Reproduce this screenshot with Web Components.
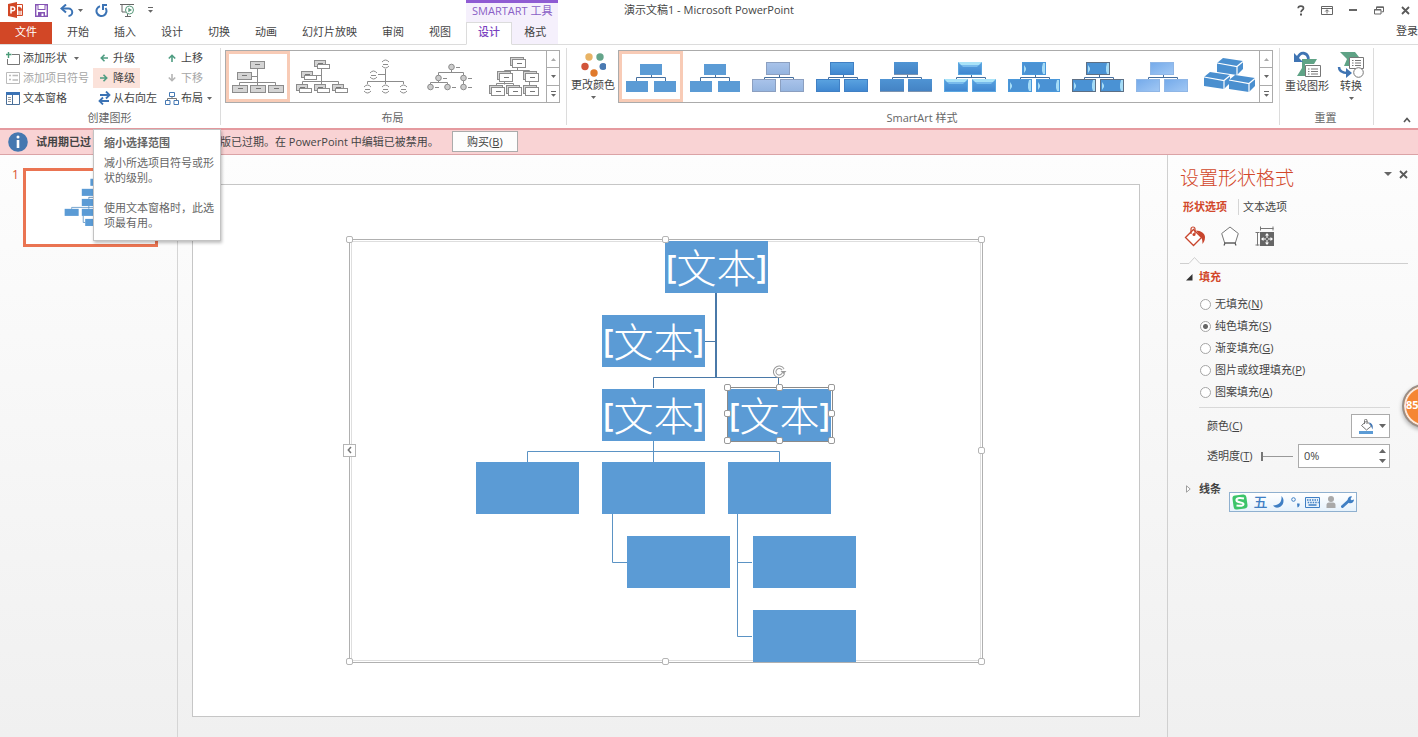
<!DOCTYPE html>
<html lang="zh-CN">
<head>
<meta charset="utf-8">
<title>演示文稿1 - Microsoft PowerPoint</title>
<style>
  html, body { margin: 0; height: 100%; }
  body {
    overflow: hidden;
    font-family: "Open Sans", "Noto Sans CJK SC", sans-serif;
    font-size: 11px;
    line-height: 16px;
    color: #444;
    background: #fff;
  }
</style>
</head>
<body>
<ppt-app></ppt-app>

<script>
const RESET = `
  * { box-sizing: border-box; }
  button, input { font: inherit; color: inherit; }
  button { background: none; border: 0; padding: 0; margin: 0; cursor: default; }
  a { color: inherit; text-decoration: none; }
  svg { display: block; }
`;

function define(tag, css, html, setup) {
  const template = document.createElement('template');
  template.innerHTML = `<style>${RESET}${css}</style>${html}`;
  customElements.define(tag, class extends HTMLElement {
    connectedCallback() {
      if (this.shadowRoot) return;
      const root = this.attachShadow({ mode: 'open' });
      root.append(template.content.cloneNode(true));
      if (setup) setup(this, root);
    }
  });
}

/* ---------- icons: [width, height, markup] ---------- */
const ICONS = {
  app: [15, 16, `<path d="M0 2l9-2v16l-9-2z" fill="#d24726"/><path d="M9 2.5h5.5v11H9" fill="#fff" stroke="#d24726"/><path d="M10.500 5v3.500h3A3 3 0 0 0 10.500 5zM10 10h3.500M10 12h3.500" fill="#d24726" stroke="#d24726" stroke-width=".8"/><path d="M3 11.500V5h1.800a1.800 1.800 0 0 1 0 3.800H3" fill="none" stroke="#fff" stroke-width="1.500"/>`],
  save: [13, 13, `<path d="M.7.700h11.600v11.600H.7z" fill="#fff" stroke="#8655b5" stroke-width="1.400"/><path d="M2.500 0h8v6h-8z" fill="#8655b5"/><path d="M3.500 1h6v4h-6z" fill="#fff"/><path d="M3 8h7v5H3z" fill="#8655b5"/><path d="M6.500 9.500h2V12h-2z" fill="#fff"/>`],
  undo: [14, 13, `<path d="M2 4.500h6.500a3.700 3.700 0 0 1 0 7.500" fill="none" stroke="#3b73b5" stroke-width="2"/><path d="M6 .5 1.500 4.500 6 8.500" fill="none" stroke="#3b73b5" stroke-width="2"/>`],
  redo: [13, 13, `<path d="M10.500 4A5 5 0 1 1 5 2.200" fill="none" stroke="#3b73b5" stroke-width="2"/><path d="M7 1h5M8 1v5" fill="none" stroke="#3b73b5" stroke-width="2"/>`],
  show: [16, 14, `<path d="M0 1.500h14M2 1.500V9h4" fill="none" stroke="#666"/><path d="M5 13.500h6M7.500 11v2" stroke="#666" fill="none"/><circle cx="9.500" cy="7" r="4" fill="#fff" stroke="#5a9b7d"/><path d="M8.300 4.800 12 7 8.300 9.200z" fill="#5a9b7d"/>`],
  more: [5, 6, `<path d="M0 .5h5" stroke="#666"/><path d="M0 3h5L2.500 5.700z" fill="#666"/>`],
  caret: [5, 3, `<path d="M0 0h5L2.500 3z" fill="#666"/>`],
  caretUp: [5, 3, `<path d="M0 3h5L2.500 0z" fill="#aaa"/>`],
  stepUp: [7, 4, `<path d="M0 4h7L3.500 0z" fill="#666"/>`],
  stepDown: [7, 4, `<path d="M0 0h7L3.500 4z" fill="#666"/>`],
  help: [8, 11, `<path d="M1.200 3.200C1.200.3 6.500.3 6.500 3.200 6.500 5 4 5 4 7.200" fill="none" stroke="#555" stroke-width="1.700"/><path d="M3 8.500h2v2H3z" fill="#555"/>`],
  ribbonOpt: [12, 9, `<path d="M.5.500h11v8H.5zM.5 2.500h11M6 7.500V4M4.200 5.500 6 3.700 7.800 5.500" fill="none" stroke="#666"/>`],
  min: [8, 2, `<path d="M0 0h8v2H0z" fill="#666"/>`],
  restore: [10, 9, `<path d="M.5 3.500h6.500v4.500H.5zM2.500 3V.8h7v5H7.500" fill="none" stroke="#666"/><path d="M2 1.500h7.500M0 4h7" stroke="#666"/>`],
  close: [9, 9, `<path d="M1 1l7 7M8 1 1 8" stroke="#5a5a5a" stroke-width="1.800"/>`],
  addShape: [14, 13, `<path d="M6 2.500h7.500v10h-12V7" fill="none" stroke="#777"/><path d="M2.500 0v6M0 2.500h5.500" stroke="#4a9b78" stroke-width="1.400"/>`],
  bullets: [14, 12, `<path d="M.5.500h13v11H.5z" fill="#fff" stroke="#bbb"/><path d="M3 3.500h2M3 7.500h2M6.500 3.500H12M6.500 8H12" stroke="#bbb" stroke-width="1.400"/>`],
  textPane: [14, 13, `<path d="M.5.500h13v12H.5z" fill="#fff" stroke="#4a6f99"/><path d="M0 0h14v3H0z" fill="#3b73b5"/><path d="M6.500 3v10" stroke="#4a6f99"/><path d="M2 5.500h3M2 7.500h3M2 9.500h3" stroke="#999"/>`],
  left: [8, 8, `<path d="M8 4H1.500M4.500.8 1.300 4l3.200 3.200" fill="none" stroke="#4f9d82" stroke-width="1.600"/>`],
  right: [8, 8, `<path d="M0 4h6.500M3.500.8 6.700 4 3.500 7.200" fill="none" stroke="#4f9d82" stroke-width="1.600"/>`],
  up: [8, 8, `<path d="M4 8V1.500M.8 4.500 4 1.300l3.200 3.200" fill="none" stroke="#4f9d82" stroke-width="1.600"/>`],
  down: [8, 8, `<path d="M4 0v6.500M.8 3.500 4 6.700l3.200-3.200" fill="none" stroke="#b5b5b5" stroke-width="1.600"/>`],
  swap: [13, 14, `<path d="M2 4h9M8 .5 11.500 4 8 7.500M11 10H2M5 6.500 1.500 10 5 13.500" fill="none" stroke="#3b73b5" stroke-width="1.800"/>`],
  layout: [14, 13, `<path d="M4.500.500h5v4h-5zM.5 8.500h4.500v4H.5zM9 8.500h4.500v4H9z" fill="#fff" stroke="#4479b5"/><path d="M7 4.500v2M2.500 8.500v-2h9v2" fill="none" stroke="#777"/>`],
  colors: [26, 26, `<circle cx="9" cy="6" r="3.700" fill="#e8b365"/><circle cx="20" cy="6" r="3.700" fill="#64a48a"/><circle cx="5" cy="15.500" r="3.700" fill="#d2553a"/><circle cx="23" cy="15.500" r="3.500" fill="#4a7ab2"/><circle cx="14" cy="22" r="3.700" fill="#e07a2c"/>`],
  reset: [28, 27, `<path d="M9 8h15l-3 5h-9v12H4l5-8z" fill="#5fa386"/><path d="M15.500 8C14.500 1 7.500 0 4.500 7" fill="none" stroke="#3f74b3" stroke-width="2.800"/><path d="M1 2v9h9z" fill="#3f74b3"/><path d="M12.500 14.500h15v11h-15z" fill="#fff" stroke="#777"/><path d="M15 18h1.500M18 18h7M15 20.500h1.500M18 20.500h7M15 23h1.500M18 23h7" stroke="#777"/>`],
  convert: [28, 27, `<path d="M3 1h15l4 5-4 6h-6v3H7l3-7z" fill="#5fa386"/><path d="M12.500 6.500h14v11h-14z" fill="#fff" stroke="#777"/><path d="M15 9.500h1.500M18 9.500h6M15 12h1.500M18 12h6M15 14.500h1.500M18 14.500h6" stroke="#777"/><circle cx="21.500" cy="21.500" r="4.800" fill="#fff" stroke="#777"/><path d="M2 16c0 5 4 6 9 6" fill="none" stroke="#3f74b3" stroke-width="2.500"/><path d="M9 17l6 5-6 5z" fill="#3f74b3"/>`],
  collapse: [8, 6, `<path d="M1 5l3-3.500L7 5" fill="none" stroke="#555" stroke-width="1.600"/>`],
  info: [20, 20, `<circle cx="10" cy="10" r="9.800" fill="#4578b0"/><circle cx="10" cy="5" r="1.500" fill="#fff"/><path d="M8.700 8h2.600v8H8.700z" fill="#fff"/>`],
  paneCaret: [8, 4, `<path d="M0 0h8L4 4z" fill="#666"/>`],
  bucket: [22, 21, `<path d="M1.500 11.500 9.500 3.500l8 8-8 8z" fill="#fff" stroke="#c8452d" stroke-width="1.300"/><path d="M7 8V3a2 2 0 0 1 4 0v5" fill="none" stroke="#c8452d" stroke-width="1.200"/><circle cx="10" cy="8.500" r="1.500" fill="#c8452d"/><path d="M12 4.500c5 0 9 3 9 6.500s-1 5-2.500 7c0-4-.5-5-1-6z" fill="#c8452d"/>`],
  pentagon: [18, 20, `<path d="M9 1l8.300 6.500-3 9.500H3.700l-3-9.500z" fill="#fff" stroke="#777"/><path d="M3.500 17h11M3 19.500l1-2.500M15 19.500 14 17" stroke="#555" stroke-width="1.200"/>`],
  size: [19, 20, `<path d="M5 2.500h13.500M5.500.5v4M18 .5v4M2.500 6v13.500M.5 6.500h4M.5 19h4" stroke="#777" fill="none"/><path d="M5 6h14v14H5z" fill="#666"/><path d="M12 7l2 2.500h-4zM12 19l2-2.500h-4zM6 13l2.500-2v4zM18 13l-2.500-2v4z" fill="#fff"/><path d="M12 9v8M8 13h8" stroke="#fff"/><path d="M11 12h2v2h-2z" fill="#666"/>`],
  open: [7, 7, `<path d="M6.500 0v6.500H0z" fill="#333"/>`],
  closed: [5, 8, `<path d="M.5.800 4.200 4 .5 7.200z" fill="#fff" stroke="#888" stroke-width=".8"/>`],
  fillColor: [15, 15, `<path d="M2.500 6.500 7.500 2l5 5-5 4z" fill="#fff" stroke="#777"/><path d="M5.500 5V1.500a1 1 0 0 1 2.500 0V5" fill="none" stroke="#777"/><path d="M10 3.500c3 .5 4.500 3 3.500 7L12 7z" fill="#3b73b5"/><path d="M0 12h14v3H0z" fill="#5b9bd5"/>`],
  rotate: [15, 14, `<path d="M11 4.500A4.500 4.500 0 1 0 11.500 8" fill="none" stroke="#999" stroke-width="3.500"/><path d="M11 4.500A4.500 4.500 0 1 0 11.500 8" fill="none" stroke="#fff" stroke-width="1.500"/><path d="M8.500 6h6L11.500 9z" fill="#999"/>`],
  sogou: [16, 16, `<rect x="1" y="1" width="14" height="14" rx="3" fill="#3cc46a" transform="rotate(-8 8 8)"/><path d="M12 4.500C7 3.500 4 4 4.500 6.500S11.500 8 11.500 10s-3 2-7 1.500" fill="none" stroke="#fff" stroke-width="2"/>`],
  moon: [12, 12, `<path d="M8.500 0C12 3.500 11 10 5.500 11.500 3 12 1 11 0 9.500 6 9.500 9 6 8.500 0z" fill="#3f7fc4"/>`],
  punct: [9, 11, `<circle cx="2.500" cy="2.500" r="1.800" fill="none" stroke="#3f7fc4"/><path d="M6 6.500h2.500c.5 2-.5 3.500-2 4z" fill="#3f7fc4"/>`],
  keyboard: [15, 11, `<path d="M.5.500h14v10H.5z" fill="#e8f2fb" stroke="#3f7fc4"/><path d="M2 3h11M2.700 5.500h11" stroke="#3f7fc4" stroke-width="1.500" stroke-dasharray="1.500 1"/><path d="M3.500 8h8" stroke="#3f7fc4" stroke-width="1.500"/>`],
  person: [10, 12, `<circle cx="5" cy="3" r="3" fill="#a9a9a9"/><path d="M.5 12V9a2.500 2.500 0 0 1 2.500-2.500h4A2.500 2.500 0 0 1 9.500 9v3z" fill="#a9a9a9"/>`],
  wrench: [13, 12, `<path d="M1.500 10.500 7 5.500" stroke="#3f7fc4" stroke-width="3" stroke-linecap="round"/><path d="M7 2.500C8 .5 9.500 0 11 .5L9.500 3l1 1.300L13 3.500C13 6 10.500 8 8 7S6.500 4 7 2.500z" fill="#3f7fc4"/>`]
};
define('ui-icon', `:host { display: inline-block; flex: none; }`, ``, (host, root) => {
  const [w, h, body] = ICONS[host.getAttribute('name')];
  root.innerHTML += `<svg width="${w}" height="${h}" viewBox="0 0 ${w} ${h}" aria-hidden="true">${body}</svg>`;
});

/* ---------- header ---------- */
define('app-header', `
  :host {
    display: grid; flex: none; background: #fff;
    grid-template-columns: max-content max-content 1fr;
    grid-template-rows: 22px 22px;
    border-bottom: 1px solid #dcdcdc;
  }
  .qat { grid-area: 1 / 1; display: flex; align-items: center; padding: 0 8px; height: 20px; }
  .qat button { display: flex; align-items: center; gap: 4px; height: 20px; }
  .qat .wide { margin-right: 12px; }
  .context {
    grid-area: 1 / 2; border-top: 3px solid #8f5bd3; background: #f5f0fc; color: #8a5fc6;
    padding: 0 6px; line-height: 16px; white-space: nowrap; text-align: center;
  }
  h1 { grid-area: 1 / 1 / 2 / 4; justify-self: center; margin: 0; font-size: 11px; font-weight: 400; line-height: 20px; }
  .win { grid-area: 1 / 3; display: flex; justify-content: flex-end; align-items: center; height: 20px; }
  .win button { width: 26px; height: 20px; display: grid; place-items: center; }
  nav { display: flex; margin-bottom: -1px; }
  nav a { padding: 0 12px; line-height: 20px; white-space: nowrap; }
  .tabs { grid-area: 2 / 1; gap: 1px; padding-right: 3px; }
  .tabs .file { background: #d24726; color: #fff; padding: 0 15px; margin: 0 2px 1px 0; }
  .ctx { grid-area: 2 / 2; background: #f5f0fc; }
  .ctx a { flex: 1; text-align: center; border-bottom: 1px solid #dcdcdc; }
  .ctx .on { flex: none; background: #fff; color: #7a3fc0; font-weight: 500; padding: 0 11px; border: 1px solid #dcdcdc; border-bottom-color: #fff; line-height: 18px; }
  .sign { grid-area: 2 / 3; justify-self: end; white-space: nowrap; line-height: 18px; }
`, `
  <div class="qat">
    <button class="wide" aria-label="PowerPoint"><ui-icon name="app"></ui-icon></button>
    <button class="wide" aria-label="保存"><ui-icon name="save"></ui-icon></button>
    <button class="wide" aria-label="撤消"><ui-icon name="undo"></ui-icon><ui-icon name="caret"></ui-icon></button>
    <button class="wide" aria-label="重复"><ui-icon name="redo"></ui-icon></button>
    <button class="wide" aria-label="放映"><ui-icon name="show"></ui-icon></button>
    <button aria-label="自定义"><ui-icon name="more"></ui-icon></button>
  </div>
  <h1>演示文稿1 - Microsoft PowerPoint</h1>
  <div class="context">SMARTART 工具</div>
  <div class="win">
    <button aria-label="帮助"><ui-icon name="help"></ui-icon></button>
    <button aria-label="功能区显示选项"><ui-icon name="ribbonOpt"></ui-icon></button>
    <button aria-label="最小化"><ui-icon name="min"></ui-icon></button>
    <button aria-label="还原"><ui-icon name="restore"></ui-icon></button>
    <button aria-label="关闭"><ui-icon name="close"></ui-icon></button>
  </div>
  <nav class="tabs">
    <a class="file" href="#file">文件</a><a href="#home">开始</a><a href="#insert">插入</a><a href="#theme">设计</a>
    <a href="#transitions">切换</a><a href="#animations">动画</a><a href="#slideshow">幻灯片放映</a><a href="#review">审阅</a><a href="#view">视图</a>
  </nav>
  <nav class="ctx"><a class="on" href="#sa-design">设计</a><a href="#sa-format">格式</a></nav>
  <a class="sign" href="#sign-in">登录</a>
`);

/* ---------- ribbon ---------- */
define('ribbon-group', `
  :host { display: flex; flex-direction: column; justify-content: space-between; border-right: 1px solid #dcdcdc; padding: 0 6px 0 4px; }
  .body { display: flex; align-items: flex-start; gap: 3px; }
  .label { text-align: center; color: #666; line-height: 14px; }
`, `<div class="body"><slot></slot></div><div class="label"></div>`,
(host, root) => { root.querySelector('.label').textContent = host.getAttribute('label'); });

define('ribbon-command', `
  :host { display: flex; }
  button { display: flex; align-items: center; height: 20px; padding: 0 5px 0 2px; white-space: nowrap; }
  .ic { width: 17px; display: grid; place-items: center start; }
  .ic.mid { width: 18px; place-items: center; }
  ui-icon.drop { margin-left: 4px; }
  :host([wide]) ui-icon.drop { margin-left: 7px; }
  :host([active]) button { background: #fbe2da; }
  button:disabled { color: #a6a6a6; }
`, `<button><span class="ic"></span><slot></slot></button>`, (host, root) => {
  const button = root.querySelector('button');
  const ic = root.querySelector('.ic');
  ic.innerHTML = `<ui-icon name="${host.getAttribute('icon')}"></ui-icon>`;
  if (host.hasAttribute('mid')) ic.classList.add('mid');
  if (host.hasAttribute('off')) button.disabled = true;
  if (host.hasAttribute('drop')) button.insertAdjacentHTML('beforeend', '<ui-icon class="drop" name="caret"></ui-icon>');
});

define('ribbon-big', `
  :host { display: flex; }
  button { display: flex; flex-direction: column; align-items: center; padding-top: 3px; white-space: nowrap; }
  ui-icon.drop { margin-top: 3px; }
`, `<button></button>`, (host, root) => {
  root.querySelector('button').innerHTML = `<ui-icon name="${host.getAttribute('icon')}"></ui-icon><slot></slot>` +
    (host.hasAttribute('drop') ? '<ui-icon class="drop" name="caret"></ui-icon>' : '');
});

/* gallery previews, each 64 x 50 */
const box = (x, y, w, h, fill = '#d4d4d4', dash = true) =>
  `<rect x="${x}.5" y="${y}.5" width="${w}" height="${h}" fill="${fill}" stroke="#8c8c8c"/>` +
  (dash ? `<path d="M${x + Math.round(w / 2) - 2} ${y + Math.floor(h / 2)}.5h5" stroke="#777"/>` : '');
const wire = d => `<path d="${d}" fill="none" stroke="#8c8c8c"/>`;
const LAYOUTS = [
  wire('M31.500 17v16M13.500 33v-2.500h36V33M25 24.500h6.500') +
    box(24, 9, 14, 7) + box(11, 20, 14, 7) + box(6, 33, 15, 7) + box(24, 33, 15, 7) + box(42, 33, 15, 7),
  wire('M31.500 14v18M12.500 32v-2.500h36V32M22 23.500h9') +
    [[24, 8], [11, 19], [6, 32], [24, 32], [42, 32]].map(([x, y]) => box(x, y, 11, 6) + box(x + 3, y + 4, 12, 4, '#fff', false)).join(''),
  wire('M31.500 17v15M13.500 32v-2.500h36V32M24 22.500h7') +
    [[31, 12], [19, 23], [13, 37], [31, 37], [49, 37]].map(([x, y]) =>
      `<circle cx="${x}.5" cy="${y}" r="4" fill="#fff"/>` +
      wire(`M${x - 3} ${y - 2}q3.500-4 7 0M${x - 3} ${y + 2}q3.500 4 7 0M${x - 2} ${y}.5h5`)).join(''),
  wire('M33.500 17v3.500M20.500 24v-3.500h25V34M20.500 28v2.500M12.500 33v-2.500h17V33') +
    [[33, 15], [20, 26], [45, 26], [12, 35], [29, 35], [45, 35]].map(([x, y]) =>
      `<circle cx="${x}.5" cy="${y}" r="2.800" fill="#ccc" stroke="#8c8c8c"/>` + wire(`M${x + 5} ${y}.5h4`)).join(''),
  wire('M35.500 15v3.500M22.500 20v-1.500h25V33M22.500 30v2.500M14.500 33v-1.500h17V33') +
    [[28, 5], [15, 19], [41, 19], [7, 33], [24, 33], [41, 33]].map(([x, y]) =>
      box(x, y, 13, 8, '#d4d4d4', false) + box(x + 2, y + 2, 13, 8, '#fff')).join('')
];

const trio = (paint, big) => {
  const boxes = big ? [[19, 10], [5, 27], [33, 27]] : [[21, 12], [7, 29], [35, 29]];
  const [w, h] = big ? [24, 12] : [22, 11];
  return `<path d="M32.500 22v3.500M17.500 29v-3.500h29V29" fill="none" stroke="#466f9e"/>` + boxes.map(([x, y]) => paint(x, y, w, h)).join('');
};
const flat = fill => (x, y, w, h) => `<rect x="${x}" y="${y}" width="${w}" height="${h}" fill="${fill}"/>`;
const edged = (fill, stroke) => (x, y, w, h) => `<rect x="${x}.5" y="${y}.5" width="${w - 1}" height="${h}" fill="${fill}" stroke="${stroke}"/>`;
const sides = stroke => (x, y, w, h) => edged('#4a92d4', stroke)(x, y, w, h) +
  `<path d="M${x + 2} ${y + 3}l2 3v2l-2 3zM${x + w - 1} ${y + 1}h-2l-1 4v4l1 3h2z" fill="#a5dcf7"/>`;
const block = (x, y) =>
  `<path d="M${x} ${y + 5}l6-5 20 3v8l-6 6-20-3z" fill="#4a8fcf"/><path d="M${x} ${y + 5}l20 3.500 6-5M${x + 20} ${y + 8}v9" fill="none" stroke="#fff" stroke-width="1.200"/>`;
const STYLES = [
  trio(flat('#5b9bd5')),
  trio(flat('#5b9bd5')),
  trio(edged('url(#g-pale)', '#8b9fc0'), true),
  trio(edged('url(#g-blue)', '#4080c4'), true),
  trio((x, y, w, h) => flat('#7b93b0')(x, y + 1, w, h) + flat('url(#g-deep)')(x, y, w, h), true),
  trio((x, y, w, h) => edged('url(#g-blue)', '#5ba6e0')(x, y, w, h) +
    `<path d="M${x} ${y}h${w}l-3 3h-${w - 6}z" fill="#a9e3f8"/><path d="M${x + 3} ${y + 3}h${w - 6}l-2 2h-${w - 10}z" fill="#78bbec"/>`, true),
  trio(sides('#4a98da'), true),
  trio(sides('#5c6f85'), true),
  trio((x, y, w, h) => edged('url(#g-soft)', '#8fb6e6')(x, y, w, h), true),
  block(22, 6) + block(9, 20) + block(34, 23)
];
const GRADIENTS = `<defs>
  <linearGradient id="g-blue" x2="0" y2="1"><stop stop-color="#5aa3e0"/><stop offset="1" stop-color="#3f86d0"/></linearGradient>
  <linearGradient id="g-pale" x2="0" y2="1"><stop stop-color="#a9c3ea"/><stop offset="1" stop-color="#94b4df"/></linearGradient>
  <linearGradient id="g-deep" x2="0" y2="1"><stop stop-color="#4f94d4"/><stop offset="1" stop-color="#4483c4"/></linearGradient>
  <linearGradient id="g-soft" x2="1" y2="1"><stop stop-color="#74aaea"/><stop offset="1" stop-color="#a2c8f4"/></linearGradient>
</defs>`;

define('style-gallery', `
  :host { display: flex; margin-top: 2px; border: 1px solid #ababab; height: 53px; background: #fff; }
  .item { width: 64px; height: 51px; border: 3px solid transparent; }
  .item svg { margin: -2px -3px; }
  .item.on { border-color: #f8cbb6; }
  .scroll { display: flex; flex-direction: column; width: 13px; border-left: 1px solid #ababab; }
  .scroll button { flex: 1; display: grid; place-items: center; }
  .scroll button + button { border-top: 1px solid #ababab; }
`, ``, (host, root) => {
  const items = host.getAttribute('kind') === 'layout' ? LAYOUTS : STYLES;
  root.innerHTML += items.map((art, i) =>
    `<button class="item${i ? '' : ' on'}" aria-label="${i + 1}"><svg width="64" height="50" viewBox="0 0 64 50">${GRADIENTS}${art}</svg></button>`).join('') +
    `<div class="scroll"><button aria-label="上一行"><ui-icon name="caretUp"></ui-icon></button>
     <button aria-label="下一行"><ui-icon name="caret"></ui-icon></button><button aria-label="其他"><ui-icon name="more"></ui-icon></button></div>`;
});

define('app-ribbon', `
  :host { display: flex; flex: none; height: 83px; padding: 3px 0; background: #fff; }
  .cmds { display: grid; grid-template: repeat(3, 20px) / 89px 68px 54px; }
  .reset { gap: 8px; display: flex; padding: 0 2px 0 1px; }
  .collapse { margin: auto 7px 0 auto; height: 14px; }
  ribbon-group.first { padding-right: 5px; }
`, `
  <ribbon-group class="first" label="创建图形">
    <div class="cmds">
      <ribbon-command icon="addShape" drop wide>添加形状</ribbon-command>
      <ribbon-command icon="left" mid>升级</ribbon-command>
      <ribbon-command icon="up" mid>上移</ribbon-command>
      <ribbon-command icon="bullets" off>添加项目符号</ribbon-command>
      <ribbon-command icon="right" mid active>降级</ribbon-command>
      <ribbon-command icon="down" mid off>下移</ribbon-command>
      <ribbon-command icon="textPane">文本窗格</ribbon-command>
      <ribbon-command icon="swap" mid>从右向左</ribbon-command>
      <ribbon-command icon="layout" mid drop>布局</ribbon-command>
    </div>
  </ribbon-group>
  <ribbon-group label="布局"><style-gallery kind="layout"></style-gallery></ribbon-group>
  <ribbon-group label="SmartArt 样式">
    <ribbon-big icon="colors" drop>更改颜色</ribbon-big>
    <style-gallery kind="style"></style-gallery>
  </ribbon-group>
  <ribbon-group label="重置">
    <div class="reset">
      <ribbon-big icon="reset">重设图形</ribbon-big>
      <ribbon-big icon="convert" drop>转换</ribbon-big>
    </div>
  </ribbon-group>
  <button class="collapse" aria-label="折叠功能区"><ui-icon name="collapse"></ui-icon></button>
`);

/* ---------- message bar ---------- */
define('message-bar', `
  :host {
    display: flex; flex: none; align-items: center; height: 27px; padding: 0 0 1px 8px;
    background: #f9d3d4; border-top: 2px solid #e59a9f; border-bottom: 1px solid #dba3a6; white-space: nowrap;
  }
  b { margin-left: 8px; width: 184px; }
  button { margin-left: 13px; width: 66px; height: 21px; background: #fdfdfd; border: 1px solid #ababab; }
`, `
  <ui-icon name="info"></ui-icon><b>试用期已过</b>
  <span>版已过期。在 PowerPoint 中编辑已被禁用。</span>
  <button>购买(<u>B</u>)</button>
`);

define('tool-tip', `
  :host {
    position: absolute; left: 93px; top: 129px; width: 128px; height: 112px; padding: 5px 6px 0 10px;
    background: #fff; border: 1px solid #c3c3c3; box-shadow: 1px 2px 3px rgba(0,0,0,.25); color: #666; white-space: nowrap;
  }
  b { display: block; line-height: 15px; margin-bottom: 5px; }
  p { margin: 0 0 15px; line-height: 15px; }
`, `<b>缩小选择范围</b><p>减小所选项目符号或形<br>状的级别。</p><p>使用文本窗格时，此选<br>项最有用。</p>`);

/* ---------- organisation chart (coordinates relative to its 634 x 424 frame) ---------- */
const NODES = [
  [316, 2, '文本'], [253, 76, '文本'], [253, 150, '文本'], [379, 150, '文本'],
  [127, 223], [253, 223], [379, 223], [278, 297], [404, 297], [404, 371]
];
const MAIN_WIRES = '<path d="M367 54v85" stroke="#4a79a8" stroke-width="2"/><path d="M356 102.500h11M304.500 149v-10.500h125V149" stroke="#4a79a8"/>';
const SUB_WIRES = '<path d="M304.500 202v21M178.500 223v-10.500h252V223M263.500 275v48.500H278M388.500 275v122.500H403M388.500 323.500H403" stroke="#5b93c4"/>';

define('org-chart', `
  :host { display: block; position: relative; width: 634px; height: 424px; border: 1px solid #b0b0b0; outline: 1px solid #fff; }
  .inner { position: absolute; inset: 1px; border: 1px solid #dedede; }
  svg.wires { position: absolute; left: -1px; top: -1px; }
  .node {
    position: absolute; width: 103px; height: 52px; margin: -1px; background: #5b9bd5; color: #fff;
    display: flex; justify-content: center; align-items: center; white-space: nowrap;
    font: 300 40px/48px "Noto Sans CJK SC", sans-serif; padding-bottom: 2px;
  }
  .node b { font: 600 32px/48px "Open Sans", sans-serif; }
  .h { position: absolute; width: 7px; height: 7px; margin: -4px; background: #fff; border: 1px solid #b5b5b5; border-radius: 2px; }
  .pick { position: absolute; left: 377px; top: 147px; width: 106px; height: 55px; border: 1px solid #8a8a8a; }
  .pick .h { border-color: #999; }
  .pick ui-icon { position: absolute; left: 44px; top: -23px; }
  .expand { position: absolute; left: -7px; top: 204px; width: 13px; height: 13px; background: #fff; border: 1px solid #b5b5b5; display: grid; place-items: center; }
`, `<div class="inner"></div>`, (host, root) => {
  const handles = list => list.map(([x, y]) => `<i class="h" style="left:${x}%;top:${y}%"></i>`).join('');
  root.innerHTML +=
    `<svg class="wires" width="634" height="424" fill="none">${MAIN_WIRES}${SUB_WIRES}</svg>` +
    NODES.map(([x, y, text]) => `<div class="node" style="left:${x}px;top:${y}px">${text ? `<b>[</b>${text}<b>]</b>` : ''}</div>`).join('') +
    `<div class="pick"><ui-icon name="rotate"></ui-icon>${handles([[0, 0], [50, 0], [100, 0], [0, 50], [100, 50], [0, 100], [50, 100], [100, 100]])}</div>` +
    handles([[0, 0], [50, 0], [100, 0], [100, 50], [0, 100], [50, 100], [100, 100]]) +
    `<button class="expand" aria-label="展开文本窗格"><svg width="5" height="8"><path d="M4 1 1.300 4 4 7" fill="none" stroke="#777" stroke-width="1.500"/></svg></button>`;
});

define('slide-thumbs', `
  :host { display: flex; flex: none; align-items: flex-start; width: 178px; padding: 13px 0 0 12px; border-right: 1px solid #d5d5d5; }
  span { width: 11px; font-size: 12px; line-height: 14px; color: #d9532f; }
  .thumb { width: 135px; height: 79px; border: 3px solid #ea7452; background: #fff; }
  svg { width: 100%; }
`, `<span>1</span><button class="thumb" aria-label="幻灯片 1"></button>`, (host, root) => {
  root.querySelector('.thumb').innerHTML = `<svg viewBox="0 0 948 533" fill="none"><g transform="translate(157 55)" stroke-width="6">${MAIN_WIRES}${SUB_WIRES}` +
    NODES.map(([x, y]) => `<rect x="${x}" y="${y}" width="103" height="52" fill="#5b9bd5"/>`).join('') + `</g></svg>`;
});

define('slide-stage', `
  :host { display: block; flex: 1; min-width: 0; padding: 29px 27px 0 14px; }
  .slide { aspect-ratio: 949 / 534; border: 1px solid #c6c6c6; background: #fff; display: grid; place-items: center; }
`, `<div class="slide"><org-chart></org-chart></div>`);

/* ---------- format pane ---------- */
define('format-pane', `
  :host { display: block; flex: none; width: 251px; padding: 10px 10px 0 12px; border-left: 1px solid #d0d0d0; }
  header { display: flex; justify-content: space-between; }
  h2 { margin: 0; font-size: 19px; line-height: 26px; font-weight: 300; color: #d2472a; }
  header div { display: flex; gap: 7px; align-items: flex-start; padding-top: 4px; }
  header button { height: 10px; display: grid; place-items: center; }
  .tabs { display: flex; margin: 8px 0 0 3px; line-height: 16px; }
  .tabs a { padding-right: 11px; }
  .tabs .on, h3.on { color: #d2472a; }
  .tabs a + a { border-left: 1px solid #d5d5d5; padding-left: 4px; }
  .icons { display: flex; align-items: center; gap: 16px; height: 26px; margin: 10px 0 5px 4px; }
  .icons button:first-child { margin-right: -1px; }
  .rule { display: flex; height: 8px; }
  .rule svg { flex: none; }
  .rule i { flex: 1; border-bottom: 1px solid #cfcfcf; }
  h3 { display: flex; align-items: center; margin: 4px 0 0 6px; font-size: 11px; line-height: 18px; }
  h3 ui-icon { width: 13px; }
  fieldset { border: 0; margin: 7px 18px 0 19px; padding: 0 0 4px; border-bottom: 1px solid #d8d8d8; }
  fieldset label { display: flex; align-items: center; height: 22px; gap: 3px; }
  input[type=radio] { appearance: none; margin: 0 1px; width: 11px; height: 11px; border: 1px solid #a5a5a5; border-radius: 50%; background: #fff; }
  input[type=radio]:checked { background: radial-gradient(circle, #666 0 2px, #fff 3px); }
  .row { display: flex; align-items: center; height: 24px; margin: 6px 18px 0 27px; }
  .row .grow { flex: 1; }
  .fill { width: 39px; height: 24px; border: 1px solid #ababab; background: #fff; display: flex; align-items: center; justify-content: center; gap: 5px; padding-left: 3px; }
  input[type=range] { appearance: none; width: 32px; height: 12px; margin: 0 5px 0 0; background: linear-gradient(#999, #999) 0 50% / 100% 1px no-repeat; }
  input[type=range]::-webkit-slider-thumb { appearance: none; width: 2px; height: 9px; background: #777; }
  .spin { display: flex; width: 92px; height: 24px; border: 1px solid #ababab; background: #fff; }
  .spin input { flex: 1; width: 0; border: 0; padding: 0 5px; background: none; outline: 0; }
  .spin div { display: flex; flex-direction: column; width: 14px; padding: 1px 0; }
  .spin button { flex: 1; display: grid; place-items: center; }
  h3.line { margin-top: 12px; }
`, `
  <header><h2>设置形状格式</h2><div><button aria-label="选项"><ui-icon name="paneCaret"></ui-icon></button><button aria-label="关闭"><ui-icon name="close"></ui-icon></button></div></header>
  <nav class="tabs"><a class="on" href="#shape"><b>形状选项</b></a><a href="#text">文本选项</a></nav>
  <div class="icons">
    <button aria-label="填充与线条"><ui-icon name="bucket"></ui-icon></button>
    <button aria-label="效果"><ui-icon name="pentagon"></ui-icon></button>
    <button aria-label="大小与属性"><ui-icon name="size"></ui-icon></button>
  </div>
  <div class="rule"><svg width="22" height="8"><path d="M0 7.500h9l5.500-6 5.500 6h2" fill="none" stroke="#cfcfcf"/></svg><i></i></div>
  <h3 class="on"><ui-icon name="open"></ui-icon>填充</h3>
  <fieldset>
    <label><input type="radio" name="fill"><span>无填充(<u>N</u>)</span></label>
    <label><input type="radio" name="fill" checked><span>纯色填充(<u>S</u>)</span></label>
    <label><input type="radio" name="fill"><span>渐变填充(<u>G</u>)</span></label>
    <label><input type="radio" name="fill"><span>图片或纹理填充(<u>P</u>)</span></label>
    <label><input type="radio" name="fill"><span>图案填充(<u>A</u>)</span></label>
  </fieldset>
  <div class="row"><label class="grow" for="color">颜色(<u>C</u>)</label><button id="color" class="fill"><ui-icon name="fillColor"></ui-icon><ui-icon name="stepDown"></ui-icon></button></div>
  <div class="row"><label class="grow" for="alpha">透明度(<u>T</u>)</label><input id="alpha" type="range" min="0" max="100" value="0">
    <div class="spin"><input type="text" value="0%" aria-label="透明度"><div><button aria-label="增加"><ui-icon name="stepUp"></ui-icon></button><button aria-label="减少"><ui-icon name="stepDown"></ui-icon></button></div></div></div>
  <h3 class="line"><ui-icon name="closed"></ui-icon>线条</h3>
`);

/* ---------- floating desktop items ---------- */
define('ime-bar', `
  :host {
    position: absolute; right: 61px; top: 492px; width: 128px; height: 20px; padding: 0 2px;
    display: flex; align-items: center; justify-content: space-between;
    border: 1px solid #8fb0cf; background: linear-gradient(#fff, #e6f2fc);
  }
  button { display: grid; place-items: center; color: #3f7fc4; font-size: 14px; line-height: 18px; font-weight: 500; }
`, `
  <button aria-label="搜狗"><ui-icon name="sogou"></ui-icon></button><button>五</button>
  <button aria-label="半角"><ui-icon name="moon"></ui-icon></button><button aria-label="标点"><ui-icon name="punct"></ui-icon></button>
  <button aria-label="软键盘"><ui-icon name="keyboard"></ui-icon></button><button aria-label="账户"><ui-icon name="person"></ui-icon></button>
  <button aria-label="工具"><ui-icon name="wrench"></ui-icon></button>
`);
define('speed-ball', `
  :host { position: absolute; right: -28px; top: 384px; width: 44px; height: 44px; overflow: hidden; padding-left: 2px;
    border-radius: 50%; border: 2px solid #9a8f88; background: #f58634; box-shadow: inset 0 0 0 2px #fbe9dc, 0 2px 4px rgba(0,0,0,.3);
    color: #fff; font: bold 11px/38px "Open Sans", sans-serif; }
`, `85`);

define('ppt-app', `
  :host { display: flex; flex-direction: column; position: relative; height: 100vh; overflow: hidden; }
  main { flex: 1; min-height: 0; display: flex; background: linear-gradient(#fdfdfd, #f0f0f0); }
`, `
  <app-header></app-header>
  <app-ribbon></app-ribbon>
  <message-bar></message-bar>
  <main><slide-thumbs></slide-thumbs><slide-stage></slide-stage><format-pane></format-pane></main>
  <tool-tip></tool-tip><ime-bar></ime-bar><speed-ball></speed-ball>
`);
</script>
</body>
</html>
